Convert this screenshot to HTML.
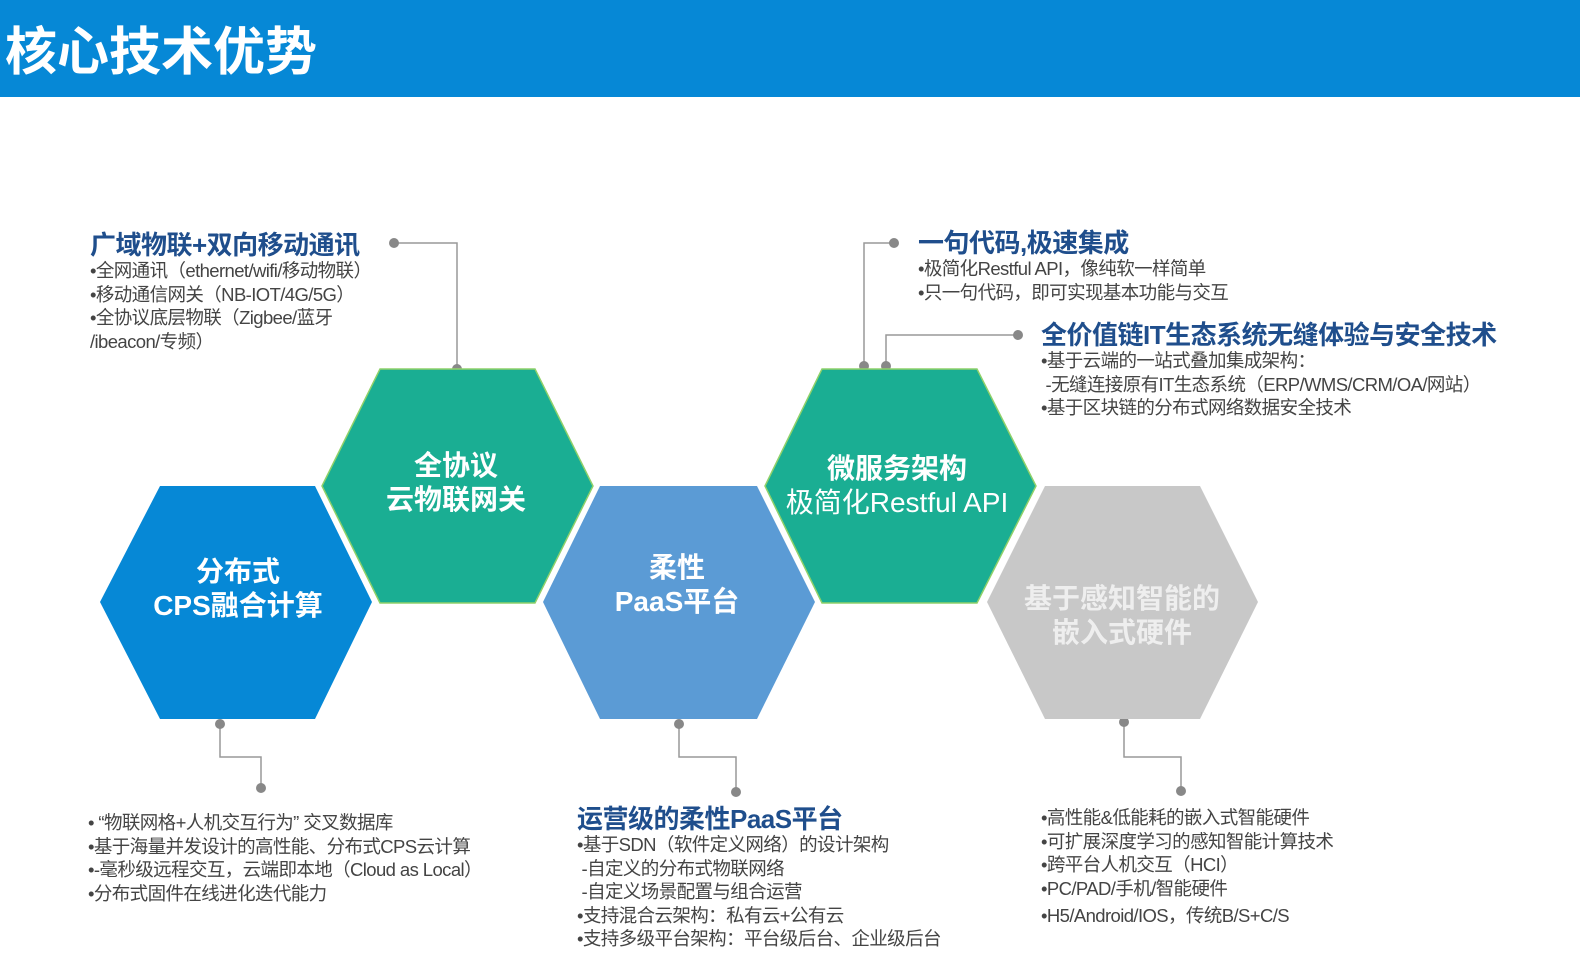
<!DOCTYPE html>
<html><head><meta charset="utf-8"><style>
body{margin:0;width:1580px;height:974px;background:#fff;position:relative;overflow:hidden;font-family:"Liberation Sans","Noto Sans CJK SC",sans-serif}
.hd{position:absolute;left:0;top:0;width:1580px;height:97px;background:#0688d6}
.hd span{position:absolute;left:5px;top:10px;font-size:52px;font-weight:bold;color:#fff;letter-spacing:0}
.t{position:absolute;white-space:nowrap;font-weight:bold;color:#1f4e8c;font-size:26px;letter-spacing:-0.5px;line-height:28px}
.b{position:absolute;white-space:nowrap;color:#444;font-size:18.5px;letter-spacing:-0.6px;line-height:23.5px}
.h{position:absolute;white-space:nowrap;color:#fff;font-weight:bold;font-size:28px;text-align:center;line-height:34px;transform:translateX(-50%)}
</style></head><body>
<div class="hd"><span>核心技术优势</span></div>
<svg width="1580" height="974" style="position:absolute;left:0;top:0">
<g stroke="#999" stroke-width="1.5" fill="none">
<polyline points="394,243 457,243 457,369"/>
<polyline points="220,724 220,757 261,757 261,788"/>
<polyline points="679,724 679,757 736,757 736,792"/>
<polyline points="1124,722 1124,757 1181,757 1181,791"/>
<polyline points="894,243 864,243 864,366"/>
<polyline points="1018,335 886,335 886,366"/>
</g>
<g fill="#888">
<circle cx="394" cy="243" r="5"/><circle cx="457" cy="369" r="5"/>
<circle cx="220" cy="724" r="5"/><circle cx="261" cy="788" r="5"/>
<circle cx="679" cy="724" r="5"/><circle cx="736" cy="792" r="5"/>
<circle cx="1124" cy="722" r="5"/><circle cx="1181" cy="791" r="5"/>
<circle cx="894" cy="243" r="5"/><circle cx="864" cy="366" r="5"/>
<circle cx="1018" cy="335" r="5"/><circle cx="886" cy="366" r="5"/>
</g>
<polygon points="100,602 160,486 315,486 372,602 315,719 160,719" fill="#0688d6"/>
<polygon points="543,602 600,486 757,486 815,602 757,719 600,719" fill="#5b9bd5"/>
<polygon points="987,602 1045,486 1200,486 1258,602 1200,719 1045,719" fill="#c8c8c8"/>
<polygon points="322,486 380,369 535,369 593,486 535,603 380,603" fill="#1aae93" stroke="#8fd16a" stroke-width="1.5"/>
<polygon points="765,486 822,369 977,369 1036,486 977,603 822,603" fill="#1aae93" stroke="#8fd16a" stroke-width="1.5"/>
</svg>
<div class="h" style="left:238px;top:555px">分布式<br>CPS融合计算</div>
<div class="h" style="left:456px;top:449px">全协议<br>云物联网关</div>
<div class="h" style="left:677px;top:551px">柔性<br>PaaS平台</div>
<div class="h" style="left:897px;top:452px">微服务架构<br><span style="font-weight:normal">极简化Restful API</span></div>
<div class="h" style="left:1122px;top:582px;color:#eee">基于感知智能的<br>嵌入式硬件</div>

<div class="t" style="left:90px;top:231px">广域物联+双向移动通讯</div>
<div class="b" style="left:90px;top:259px">•全网通讯（ethernet/wifi/移动物联）<br>•移动通信网关（NB-IOT/4G/5G）<br>•全协议底层物联（Zigbee/蓝牙<br>/ibeacon/专频）</div>

<div class="t" style="left:918px;top:229px">一句代码,极速集成</div>
<div class="b" style="left:918px;top:257px">•极简化Restful API，像纯软一样简单<br>•只一句代码，即可实现基本功能与交互</div>

<div class="t" style="left:1041px;top:321px">全价值链IT生态系统无缝体验与安全技术</div>
<div class="b" style="left:1041px;top:349px">•基于云端的一站式叠加集成架构：<br>&nbsp;-无缝连接原有IT生态系统（ERP/WMS/CRM/OA/网站）<br>•基于区块链的分布式网络数据安全技术</div>

<div class="b" style="left:88px;top:811px">• “物联网格+人机交互行为” 交叉数据库<br>•基于海量并发设计的高性能、分布式CPS云计算<br>•-毫秒级远程交互，云端即本地（Cloud as Local）<br>•分布式固件在线进化迭代能力</div>

<div class="t" style="left:577px;top:805px">运营级的柔性PaaS平台</div>
<div class="b" style="left:577px;top:833px">•基于SDN（软件定义网络）的设计架构<br>&nbsp;-自定义的分布式物联网络<br>&nbsp;-自定义场景配置与组合运营<br>•支持混合云架构：私有云+公有云<br>•支持多级平台架构：平台级后台、企业级后台</div>

<div class="b" style="left:1041px;top:806px">•高性能&amp;低能耗的嵌入式智能硬件<br>•可扩展深度学习的感知智能计算技术<br>•跨平台人机交互（HCI）<br>•PC/PAD/手机/智能硬件<br><span style="position:relative;top:4px">•H5/Android/IOS，传统B/S+C/S</span></div>
</body></html>
